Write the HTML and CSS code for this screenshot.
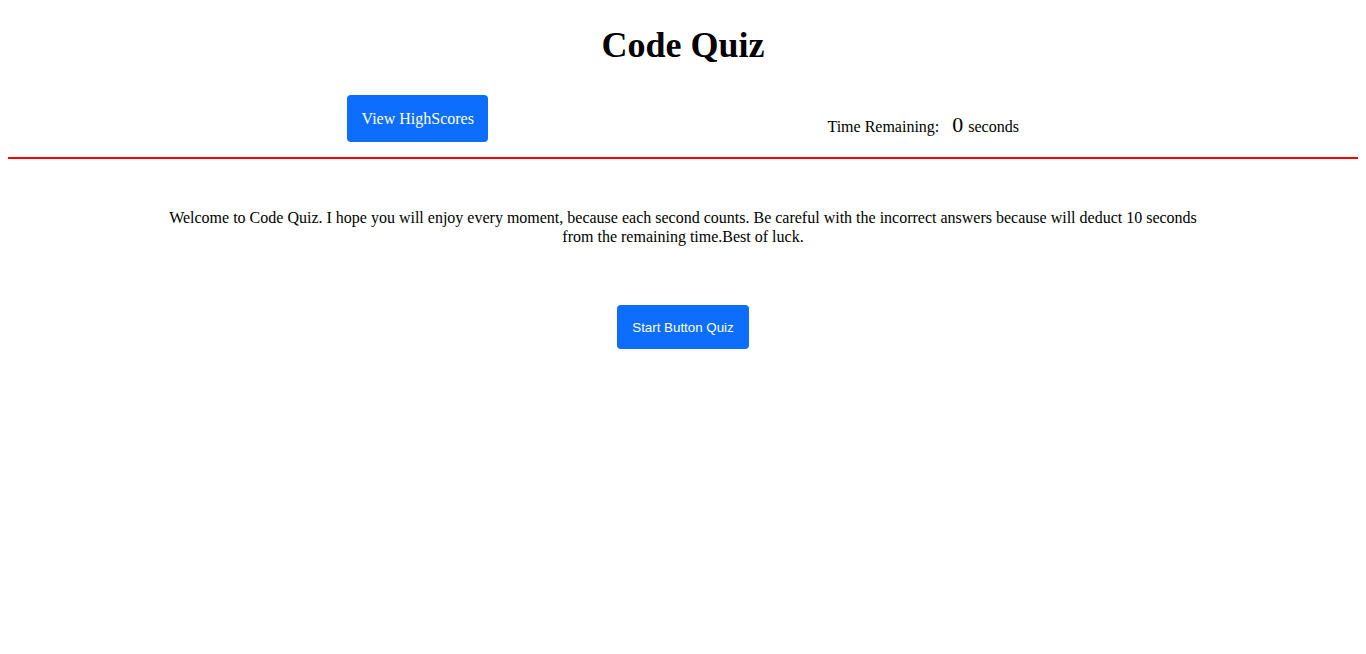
FILE: index.html
```html
<!DOCTYPE html>
<html lang="en">
<head>
<meta charset="utf-8">
<title>Code Quiz</title>
<link rel="stylesheet" href="styles.css">
</head>
<body>
<h1 class="title">Code Quiz</h1>
<header class="topbar">
  <button class="btn btn-scores">View HighScores</button>
  <div class="timer">Time Remaining: <span class="count">0</span> seconds</div>
</header>
<main class="intro">
  <p class="welcome">Welcome to Code Quiz. I hope you will enjoy every moment, because each second counts. Be careful with the incorrect answers because will deduct 10 seconds from the remaining time.Best of luck.</p>
  <button class="btn btn-start">Start Button Quiz</button>
</main>
</body>
</html>
```
FILE: styles.css
```css
html, body {
  background: #fff;
}
body {
  margin: 8px;
  font-family: "Liberation Serif", "Times New Roman", serif;
  font-size: 16px;
  color: #000;
}
.title {
  margin: 16px 0 0;
  font-size: 36px;
  font-weight: bold;
  text-align: center;
}
.topbar {
  display: flex;
  justify-content: space-evenly;
  align-items: flex-start;
  padding: 29px 0 15px;
  border-bottom: 2px solid #ff0000;
}
.btn {
  background: #0d6efd;
  color: #fff;
  border: 0;
  border-radius: 4px;
  cursor: pointer;
}
.btn-scores {
  font-family: "Liberation Serif", "Times New Roman", serif;
  font-size: 16px;
  padding: 14.5px 14.5px;
  line-height: normal;
}
.timer {
  margin-top: 17px;
  white-space: nowrap;
}
.count {
  font-size: 22px;
  margin: 0 1px 0 9px;
}
.intro {
  display: flex;
  flex-direction: column;
  align-items: center;
}
.welcome {
  width: 1040px;
  margin: 49px 0 59px;
  line-height: 19px;
  text-align: center;
}
.btn-start {
  font-family: "Liberation Sans", Arial, sans-serif;
  font-size: 13.333px;
  padding: 14.5px 15.5px;
  line-height: normal;
}
```
